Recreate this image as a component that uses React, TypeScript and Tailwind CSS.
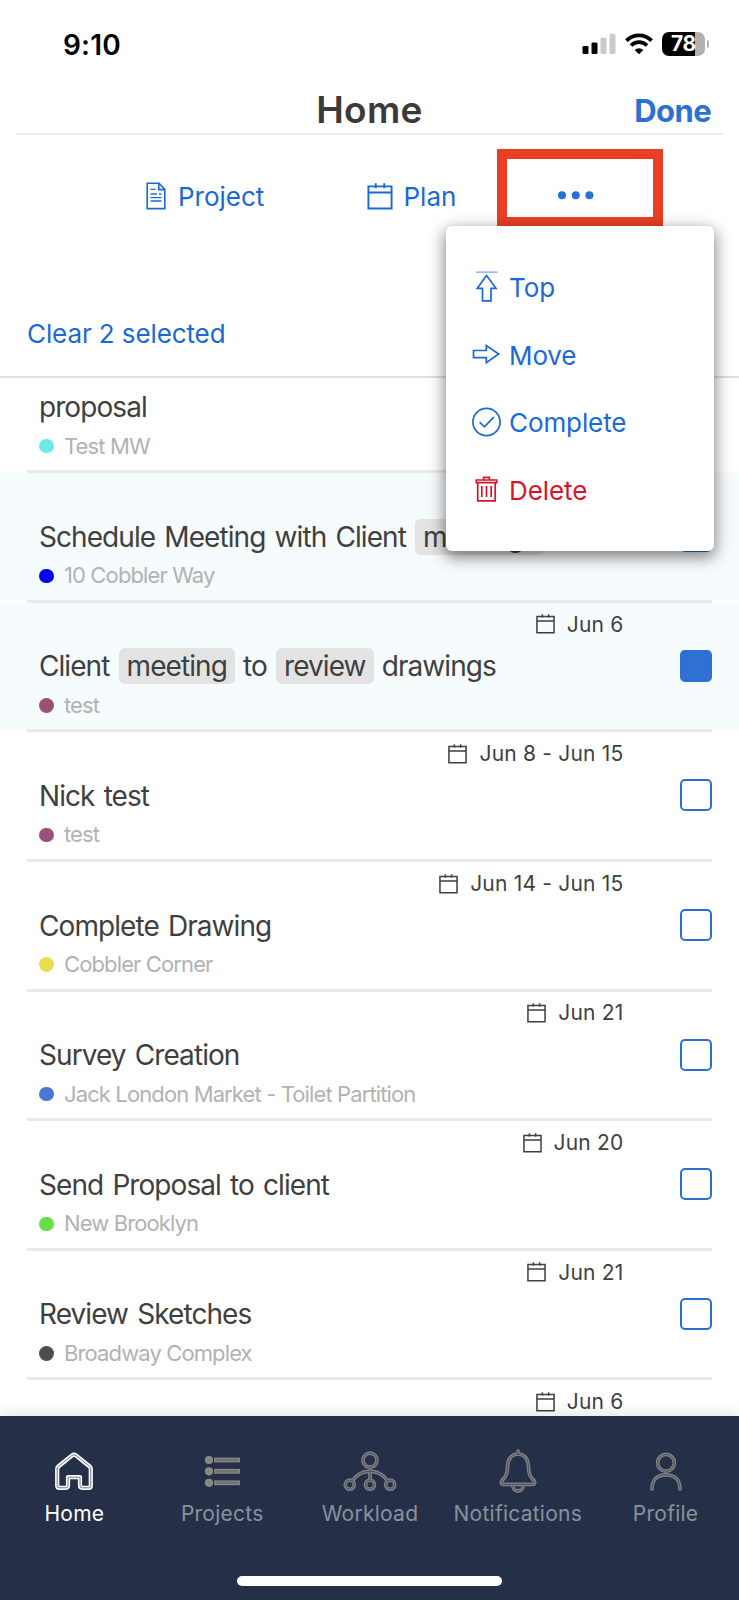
import { ReactNode } from "react";
import clsx from "clsx";

interface Task {
  title: ReactNode;
  project: string;
  dot: string;
  date?: string;
  selected?: boolean;
}

function Chip({ children }: { children: ReactNode }) {
  return <span className="-mr-px inline-flex h-9 items-center rounded-md bg-[#e3e3e3] px-2">{children}</span>;
}

const tasks: Task[] = [
  { title: "proposal", project: "Test MW", dot: "bg-[#6de9ea]" },
  {
    title: (
      <>
        Schedule Meeting with Client <Chip>meetings</Chip>
      </>
    ),
    project: "10 Cobbler Way",
    dot: "bg-[#0000f5]",
    selected: true,
  },
  {
    title: (
      <>
        Client <Chip>meeting</Chip> to <Chip>review</Chip> drawings
      </>
    ),
    project: "test",
    dot: "bg-[#9b5078]",
    date: "Jun 6",
    selected: true,
  },
  { title: "Nick test", project: "test", dot: "bg-[#9b5078]", date: "Jun 8 - Jun 15" },
  { title: "Complete Drawing", project: "Cobbler Corner", dot: "bg-[#e8de50]", date: "Jun 14 - Jun 15" },
  { title: "Survey Creation", project: "Jack London Market - Toilet Partition", dot: "bg-[#4a76d4]", date: "Jun 21" },
  { title: "Send Proposal to client", project: "New Brooklyn", dot: "bg-[#68dd46]", date: "Jun 20" },
  { title: "Review Sketches", project: "Broadway Complex", dot: "bg-[#4d4d4d]", date: "Jun 21" },
  { title: "", project: "", dot: "bg-white", date: "Jun 6" },
];

function CalendarIcon({ className, strokeWidth = 1.6 }: { className: string; strokeWidth?: number }) {
  return (
    <svg viewBox="0 0 20 21" fill="none" stroke="currentColor" strokeWidth={strokeWidth} className={className}>
      <path d="M1 2.6h18v17.2H1zM1 7.4h18M6.7.2v3.8M13.3.2v3.8" />
    </svg>
  );
}

function StatusBar() {
  return (
    <div className="flex h-22 items-center justify-between pr-[30px] pl-[63px]">
      <span className="pt-0.5 text-[28px] font-semibold tracking-[0.2px] text-black">9:10</span>
      <div className="flex items-center">
        <svg viewBox="0 0 34 22" className="h-[22px] w-[34px]">
          <rect x="0.5" y="13" width="6" height="8" rx="1.3" fill="#000" />
          <rect x="9.5" y="9.5" width="6" height="11.5" rx="1.3" fill="#000" />
          <rect x="18.5" y="4.7" width="6" height="16.3" rx="1.3" fill="#cbcbcb" />
          <rect x="27.5" y="0.7" width="6" height="20.3" rx="1.3" fill="#cbcbcb" />
        </svg>
        <svg viewBox="0 0 28 22" fill="none" stroke="#000" className="ml-[9px] h-[22px] w-7">
          <path d="M1.4 7.6a17.8 17.8 0 0 1 25.2 0" strokeWidth="3.7" />
          <path d="M6 12.5a11.3 11.3 0 0 1 16 0" strokeWidth="3.7" />
          <path d="M14 21.3 9.7 17a6.1 6.1 0 0 1 8.6 0z" fill="#000" stroke="none" />
        </svg>
        <div className="ml-[9px] flex h-6 w-[43px] items-center justify-center rounded-[7px] bg-linear-to-r from-black from-77% to-[#b1b1b1] to-77%">
          <span className="text-[21px] leading-6 font-bold tracking-[-0.4px] text-white">78</span>
        </div>
        <span className="ml-[1.5px] h-2 w-[2.5px] rounded-r-full bg-[#b1b1b1]" />
      </div>
    </div>
  );
}

function ActionBar() {
  return (
    <div className="flex h-[122px] items-center pl-[146px] text-[26px] text-[#1a69d8]">
      <button className="flex w-[221px] items-center gap-3">
        <svg viewBox="0 0 20 28" fill="none" stroke="currentColor" strokeWidth="1.6" className="h-7 w-5">
          <path d="M13 1.2H1.2v25.4h17.6V7.4z" />
          <path d="M12.8 1.2v6.4h6" strokeWidth="1.6" />
          <path d="M4.5 7.4h5M4.5 12h6.5M13 12h2.3M4.5 15.7h11M4.5 19h11" strokeWidth="1.3" />
        </svg>
        Project
      </button>
      <button className="flex w-[190.5px] items-center gap-[10.5px]">
        <CalendarIcon className="h-[27px] w-[26px]" strokeWidth={1.5} />
        Plan
      </button>
      <div className="relative">
        <svg viewBox="0 0 36 8" fill="#2c70d4" overflow="visible" className="h-2 w-9">
          <circle cx="4" cy="3.2" r="4" />
          <circle cx="17.8" cy="3.2" r="4" />
          <circle cx="31.4" cy="3.2" r="4" />
        </svg>
        <span className="absolute -top-[43.5px] -left-[60.5px] h-[78px] w-[166px] border-10 border-[#eb3f25]" />
      </div>
    </div>
  );
}

const menuItems = [
  {
    label: "Top",
    color: "text-[#1a69d8]",
    icon: (
      <>
        <path d="M4 1.2h21.5" stroke="#a3b9ea" strokeWidth="1.8" />
        <path d="M14.5 4.4 24 17.3h-5v12.6h-8.5V17.3H5.3z" />
      </>
    ),
  },
  {
    label: "Move",
    color: "text-[#1a69d8]",
    icon: <path d="M1.5 11.5h12.8V6.6L26.7 15l-12.4 8.6v-4.9H1.5z" />,
  },
  {
    label: "Complete",
    color: "text-[#1a69d8]",
    icon: (
      <>
        <circle cx="14.5" cy="15" r="13.6" />
        <path d="m7.6 15.2 4.8 4.6 9.3-9.6" />
      </>
    ),
  },
  {
    label: "Delete",
    color: "text-[#d8142c]",
    icon: (
      <>
        <path d="M4.3 6h20.4v2.6H4.3zM5.7 8.8v18h17.5v-18" />
        <path d="M11.6 5.8V3.4h5.8v2.4M9.8 12v11M14.5 12v11M19.2 12v11" />
      </>
    ),
  },
];

function ActionMenu() {
  return (
    <div className="absolute top-[226px] left-[446px] z-10 h-[325px] w-[268px] rounded-md bg-white pt-[27px] pl-[26px] shadow-[0_5px_16px_1px_rgba(0,0,0,0.5)]">
      {menuItems.map(({ label, color, icon }) => (
        <button key={label} className={clsx("flex h-[67.7px] items-center gap-2 text-[26px]", color)}>
          <svg viewBox="0 0 29 31" fill="none" stroke="currentColor" strokeWidth="1.7" className="h-[31px] w-[29px]">
            {icon}
          </svg>
          <span className="pt-px tracking-[-0.1px]">{label}</span>
        </button>
      ))}
    </div>
  );
}

function TaskRow({ title, project, dot, date, selected }: Task) {
  return (
    <div className="h-[129.6px]">
      <div className={clsx("h-[126.6px] pr-[27px] pl-[39px]", selected && "bg-[#f6fbfe]")}>
        <div className="flex h-[43px] items-center justify-end gap-3 pr-[88.5px] text-[21px] tracking-[0.2px] text-[#3f3f3f]">
          {date && (
            <>
              <CalendarIcon className="h-5 w-[19px]" />
              {date}
            </>
          )}
        </div>
        <div className="flex h-10 items-center justify-between">
          <div className="pt-px text-[28px] leading-10 tracking-[-0.93px] [word-spacing:2.2px] whitespace-nowrap text-[#3f3f3f]">
            {title}
          </div>
          <span
            className={clsx(
              "size-8 rounded-[5px] border-2 border-[#2c6fd2]",
              selected ? "bg-[#3070d3]" : "bg-white"
            )}
          />
        </div>
        <div className="flex h-[38px] items-center gap-[10.5px] pt-px text-[22px] tracking-[-0.88px] text-[#b2b2b2]">
          <span className={clsx("size-[14.5px] rounded-full", dot)} />
          {project}
        </div>
      </div>
      <div className="mr-[27px] ml-[27px] h-[3px] bg-[#e9e9e9]" />
    </div>
  );
}

// Draws each shape twice: a wide stroke with a thin dark line running inside it
function OutlinedIcon({ d, width, active }: { d: string; width: number; active?: boolean }) {
  return (
    <svg width={width} height="44" viewBox={`0 0 ${width} 44`} fill="none" strokeLinejoin="round" strokeLinecap="round">
      <path d={d} stroke={active ? "#ffffff" : "#7f8084"} strokeWidth={active ? 4.2 : 3.7} />
      <path d={d} stroke={active ? "#6f7789" : "#4a5160"} strokeWidth={1} />
    </svg>
  );
}

const tabs = [
  {
    label: "Home",
    width: 40,
    d: "M3.2 20V36.7Q3.2 38.8 5.3 38.8H11.7Q14 38.8 14 36.5V28.2H26V36.5Q26 38.8 28.3 38.8H34.7Q36.8 38.8 36.8 36.7V20Q36.8 18.6 35.7 17.5L22.2 6.6Q20 4.8 17.8 6.6L4.3 17.5Q3.2 18.6 3.2 20Z",
  },
  {
    label: "Projects",
    width: 36,
    d: "",
  },
  {
    label: "Workload",
    width: 56,
    d: "M35 11.2a7 7 0 1 1-14 0a7 7 0 1 1 14 0M12.3 35.7a4.5 4.5 0 1 1-9 0a4.5 4.5 0 1 1 9 0M32.5 35.7a4.5 4.5 0 1 1-9 0a4.5 4.5 0 1 1 9 0M52.7 35.7a4.5 4.5 0 1 1-9 0a4.5 4.5 0 1 1 9 0M10.5 31.5Q17 22.3 28 22.3Q39 22.3 45.5 31.5M28 19V31",
  },
  {
    label: "Notifications",
    width: 38,
    d: "M19 2V5M19 5C12 5 8.8 10.5 8.6 17.5C8.4 25 7 28 4 30.5C1.4 32.8 2 35.4 4.5 35.4H33.5C36 35.4 36.6 32.8 34 30.5C31 28 29.6 25 29.4 17.5C29.2 10.5 26 5 19 5ZM13.8 37C14.3 40.2 16.2 41.8 19 41.8C21.8 41.8 23.7 40.2 24.2 37",
  },
  {
    label: "Profile",
    width: 36,
    d: "M26.4 13.8a8.4 8.4 0 1 1-16.8 0a8.4 8.4 0 1 1 16.8 0M4 40C4 30.5 9.5 25.8 18 25.8C26.5 25.8 32 30.5 32 40",
  },
];

function ListIcon() {
  return (
    <svg width="36" height="44" viewBox="0 0 36 44" fill="#6f7278" stroke="#8b8985" strokeWidth="1.2">
      {[11, 22.3, 33.8].map((y) => (
        <g key={y}>
          <circle cx="5" cy={y} r="2.4" strokeWidth="3.4" />
          <rect x="10.8" y={y - 1.8} width="24.6" height="3.6" />
        </g>
      ))}
    </svg>
  );
}

function TabBar() {
  return (
    <nav className="relative h-[184px] bg-[#253048] pt-[33px] shadow-[0_-3px_14px_rgba(0,0,0,0.1)]">
      <div className="grid grid-cols-5">
        {tabs.map(({ label, width, d }, i) => (
          <button
            key={label}
            className={clsx(
              "flex flex-col items-center pl-px text-[21px] leading-[41px] tracking-[0.25px] whitespace-nowrap",
              i === 0 ? "text-white" : "text-[#8a919e]"
            )}
          >
            {d ? <OutlinedIcon d={d} width={width} active={i === 0} /> : <ListIcon />}
            {label}
          </button>
        ))}
      </div>
      <div className="mx-auto mt-[42px] h-2.5 w-[265px] rounded-full bg-white" />
    </nav>
  );
}

export default function App() {
  return (
    <div className="relative h-[1600px] w-[739px] overflow-hidden bg-white font-[Inter,sans-serif]">
      <StatusBar />
      <header className="mx-4 grid h-[47px] grid-cols-3 items-center border-b-2 border-[#ececec]">
        <h1 className="col-start-2 pb-0.5 text-center text-[37px] leading-[44px] font-semibold tracking-[0.3px] text-[#3a3a3a]">
          Home
        </h1>
        <button className="pr-3 pb-px text-right text-[31px] leading-[44px] font-bold tracking-[-0.6px] text-[#2b70d4]">
          Done
        </button>
      </header>
      <ActionBar />
      <div className="flex h-[121px] items-center border-b-2 border-[#dedede] pt-[34px] pl-[27px]">
        <button className="text-[26px] tracking-[-0.1px] text-[#1a69d8]">Clear 2 selected</button>
      </div>
      <ActionMenu />
      <main className="h-[1038px] overflow-hidden">
        <div className="-mt-[34.3px]">
          {tasks.map((task, i) => (
            <TaskRow key={i} {...task} />
          ))}
        </div>
      </main>
      <TabBar />
    </div>
  );
}
